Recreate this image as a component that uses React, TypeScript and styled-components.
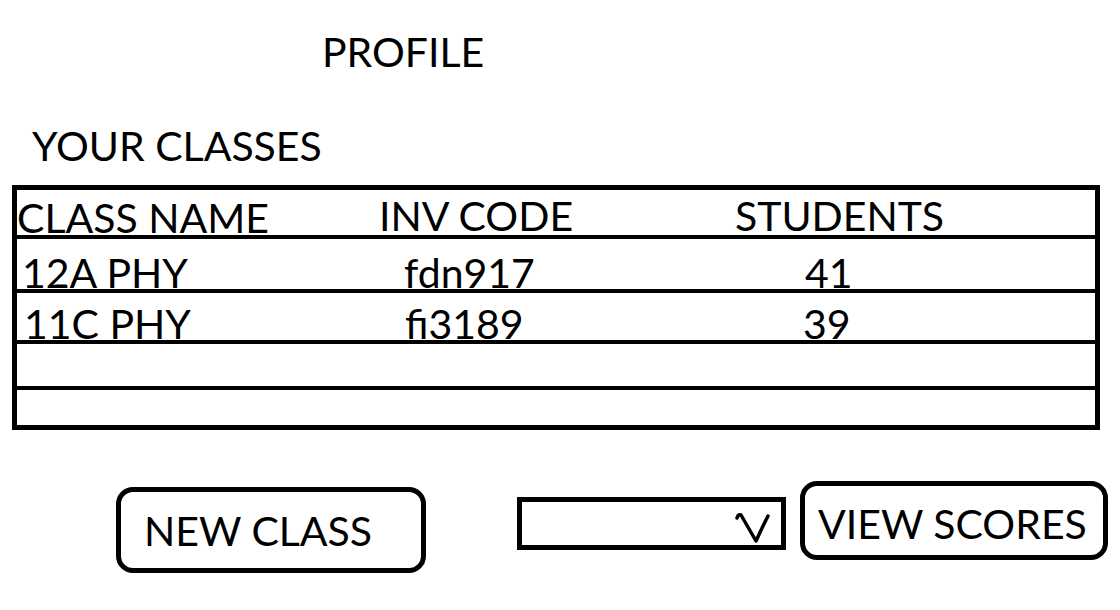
import React from 'react';
import styled, { createGlobalStyle } from 'styled-components';

const GlobalStyle = createGlobalStyle`
  html, body {
    margin: 0;
    padding: 0;
    background: #ffffff;
  }
  body {
    font-family: Lato, "Open Sans", sans-serif;
    color: #000000;
  }
`;

const Page = styled.div`
  width: 1120px;
  height: 610px;
  overflow: hidden;
  box-sizing: border-box;
  padding-top: 28px;
`;

const Title = styled.h1`
  margin: 0 0 0 322px;
  font-size: 41px;
  font-weight: 400;
  line-height: 48px;
`;

const SectionTitle = styled.h2`
  margin: 46px 0 0 32px;
  font-size: 41px;
  font-weight: 400;
  line-height: 48px;
`;

const Table = styled.div`
  margin: 15px 0 0 12px;
  width: 1088px;
  box-sizing: border-box;
  border: 5px solid #000;
`;

const Row = styled.div<{ $height: number; $last?: boolean }>`
  display: grid;
  grid-template-columns: 362px 356px 1fr;
  height: ${(p) => p.$height}px;
  border-bottom: ${(p) => (p.$last ? 'none' : '4px solid #000')};
  align-items: end;
`;

const Cell = styled.div<{ $pad: number; $drop?: number }>`
  padding-left: ${(p) => p.$pad}px;
  font-size: 41px;
  line-height: 41px;
  white-space: nowrap;
  transform: translateY(${(p) => p.$drop ?? 0}px);
`;

const Actions = styled.div`
  display: flex;
  align-items: flex-start;
  margin-top: 51px;
  padding-left: 116px;
`;

const Button = styled.button<{ $width: number; $height: number; $top: number; $pad: number; $nudge?: number }>`
  box-sizing: border-box;
  width: ${(p) => p.$width}px;
  height: ${(p) => p.$height}px;
  margin-top: ${(p) => p.$top}px;
  padding: ${(p) => p.$nudge ?? 0}px 0 0 ${(p) => p.$pad}px;
  border: 5px solid #000;
  border-radius: 17px;
  background: #fff;
  font-family: Lato, "Open Sans", sans-serif;
  font-size: 41px;
  color: #000;
  text-align: left;
  display: flex;
  align-items: center;
`;

const Select = styled.div`
  box-sizing: border-box;
  width: 269px;
  height: 53px;
  margin: 16px 14px 0 91px;
  border: 5px solid #000;
  position: relative;
  background: #fff;
`;

const Chevron = styled.svg`
  position: absolute;
  left: 212px;
  top: 8px;
`;

const classes = [
  { name: '12A PHY', code: 'fdn917', students: 41, pads: [5, 25, 70], height: 50 },
  { name: '11C PHY', code: 'fi3189', students: 39, pads: [7, 26, 68], height: 47 },
];

export default function App() {
  return (
    <>
      <GlobalStyle />
      <Page>
        <Title>PROFILE</Title>
        <SectionTitle>YOUR CLASSES</SectionTitle>
        <Table>
          <Row $height={45}>
            <Cell $pad={0} $drop={3}>CLASS NAME</Cell>
            <Cell $pad={0} $drop={1}>INV CODE</Cell>
            <Cell $pad={0} $drop={1}>STUDENTS</Cell>
          </Row>
          {classes.map((c) => (
            <Row key={c.name} $height={c.height}>
              <Cell $pad={c.pads[0]} $drop={4}>{c.name}</Cell>
              <Cell $pad={c.pads[1]} $drop={4}>{c.code}</Cell>
              <Cell $pad={c.pads[2]} $drop={4}>{c.students}</Cell>
            </Row>
          ))}
          <Row $height={42} />
          <Row $height={35} $last />
        </Table>
        <Actions>
          <Button $width={310} $height={86} $top={6} $pad={23}>NEW CLASS</Button>
          <Select>
            <Chevron width="44" height="38" viewBox="0 0 44 38">
              <path
                d="M3 8 Q4 4 7 5 L22 31 L29 16 L34 6"
                fill="none"
                stroke="#000"
                strokeWidth="3.5"
                strokeLinecap="round"
                strokeLinejoin="round"
              />
            </Chevron>
          </Select>
          <Button $width={308} $height={79} $top={0} $pad={13} $nudge={6}>VIEW SCORES</Button>
        </Actions>
      </Page>
    </>
  );
}
